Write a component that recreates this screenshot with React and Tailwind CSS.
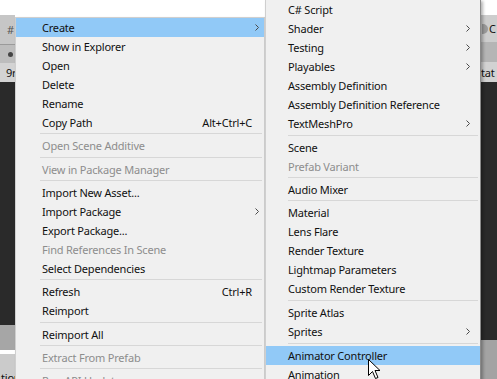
import React from 'react';

const leftItems = [
  { t: 'Create', arrow: true, hl: true },
  { t: 'Show in Explorer' },
  { t: 'Open' },
  { t: 'Delete' },
  { t: 'Rename' },
  { t: 'Copy Path', sc: 'Alt+Ctrl+C' },
  { sep: 4 },
  { t: 'Open Scene Additive', dis: true },
  { sep: 5 },
  { t: 'View in Package Manager', dis: true },
  { sep: 4 },
  { t: 'Import New Asset...' },
  { t: 'Import Package', arrow: true },
  { t: 'Export Package...' },
  { t: 'Find References In Scene', dis: true },
  { t: 'Select Dependencies' },
  { sep: 4 },
  { t: 'Refresh', sc: 'Ctrl+R' },
  { t: 'Reimport' },
  { sep: 5 },
  { t: 'Reimport All' },
  { sep: 4 },
  { t: 'Extract From Prefab', dis: true },
  { sep: 4 },
  { t: 'Run API Updater...', dis: true },
];

const subItems = [
  { t: 'C# Script' },
  { t: 'Shader', arrow: true },
  { t: 'Testing', arrow: true },
  { t: 'Playables', arrow: true },
  { t: 'Assembly Definition' },
  { t: 'Assembly Definition Reference' },
  { t: 'TextMeshPro', arrow: true },
  { sep: 5 },
  { t: 'Scene' },
  { t: 'Prefab Variant', dis: true },
  { sep: 4 },
  { t: 'Audio Mixer' },
  { sep: 4 },
  { t: 'Material' },
  { t: 'Lens Flare' },
  { t: 'Render Texture' },
  { t: 'Lightmap Parameters' },
  { t: 'Custom Render Texture' },
  { sep: 5 },
  { t: 'Sprite Atlas' },
  { t: 'Sprites', arrow: true },
  { sep: 5 },
  { t: 'Animator Controller', hl: true },
  { t: 'Animation' },
];

const sepClass = { 4: 'h-[4px] pt-[1px]', 5: 'h-[5px] pt-[2px]' };

function Chevron() {
  return (
    <svg width="4" height="7" viewBox="0 0 4 7" className="block">
      <path d="M0.5 0.5 L3.5 3.5 L0.5 6.5" fill="none" stroke="#4a4a4a" strokeWidth="1" />
    </svg>
  );
}

function Menu({ items, textPad, rightPad, sepLeft }) {
  return items.map((it, i) =>
    it.sep ? (
      <div key={i} className={`${sepClass[it.sep]} ${sepLeft} pr-[2px]`}>
        <div className="h-px bg-[#d7d7d7]" />
      </div>
    ) : (
      <div
        key={i}
        className={`flex items-center h-[19px] ${textPad} ${rightPad} ${it.hl ? 'bg-[#91c9f7]' : ''} ${it.dis ? 'text-[#8d8d8d]' : 'text-[#111]'}`}
      >
        <span className="flex-1 whitespace-nowrap">{it.t}</span>
        {it.sc && <span className="mr-[1px] whitespace-nowrap">{it.sc}</span>}
        <span className="w-[6px] flex justify-end">{it.arrow && <Chevron />}</span>
      </div>
    )
  );
}

export default function App() {
  return (
    <div className="relative w-[497px] h-[379px] overflow-hidden bg-white font-['Noto_Sans',sans-serif] text-[11px] tracking-[-0.2px] leading-none select-none">
      <div className="flex h-full">
        {/* left strip of the editor behind */}
        <div className="w-[15px] flex flex-col">
          <div className="h-[15px] bg-white" />
          <div className="h-[30px] bg-[#c6c6c6] border-b border-[#9a9a9a] flex items-center pl-[7px] text-[#555] text-[11px]">#</div>
          <div className="h-[18px] bg-[#bdbdbd] flex items-center pl-[8px]">
            <div className="w-[5px] h-[5px] rounded-full bg-[#444]" />
          </div>
          <div className="h-[19px] bg-[#d3d3d3] flex items-center pl-[6px] text-[#111]">9r</div>
          <div className="flex-1 bg-[#2a2a2a]" />
          <div className="h-[25px] bg-[#a6a6a6]" />
          <div className="h-[29px] bg-[#cbcbcb] flex items-end pl-[1px] text-[#111] translate-y-[4px]">tior</div>
        </div>
        <div className="flex-1 bg-white" />
        {/* right strip of the editor behind */}
        <div className="w-[16px] flex flex-col">
          <div className="h-[15px] bg-white" />
          <div className="h-[27px] bg-[#cdcdcd] flex items-center gap-[1px] pl-[1px] text-[#111]">
            <div className="w-[6px] h-[10px] rounded-r-full bg-[#9a9a9a]" />
            <span>C</span>
          </div>
          <div className="h-[20px] bg-[#b5b5b5]" />
          <div className="h-[20px] bg-[#d2d2d2] flex items-center text-[#111]">tat</div>
          <div className="flex-1 bg-[#2a2a2a]" />
          <div className="h-[39px] bg-[#a3a3a3]" />
        </div>
      </div>

      {/* context menu */}
      <div className="absolute left-[15px] top-[17px] w-[250px] bg-[#f0f0f0] border border-[#cfcfcf] shadow-[2px_2px_3px_rgba(0,0,0,0.25)]">
        <Menu items={leftItems} textPad="pl-[26px]" rightPad="pr-[5px]" sepLeft="pl-[24px]" />
      </div>

      {/* create submenu */}
      <div className="absolute left-[265px] top-[-1px] w-[216px] bg-[#f0f0f0] border border-[#cfcfcf] border-r-[#8a8a8a] shadow-[2px_2px_3px_rgba(0,0,0,0.3)]">
        <Menu items={subItems} textPad="pl-[22px]" rightPad="pr-[10px]" sepLeft="pl-[22px]" />
      </div>

      {/* mouse cursor */}
      <svg className="absolute left-[368px] top-[359px]" width="13" height="21" viewBox="0 0 13 21">
        <path d="M0.5 0.5 L0.5 16.5 L4.5 12.5 L7.5 19.5 L10 18.5 L7 11.5 L12 11.5 Z" fill="#fff" stroke="#000" strokeWidth="1" strokeLinejoin="round" />
      </svg>
    </div>
  );
}
